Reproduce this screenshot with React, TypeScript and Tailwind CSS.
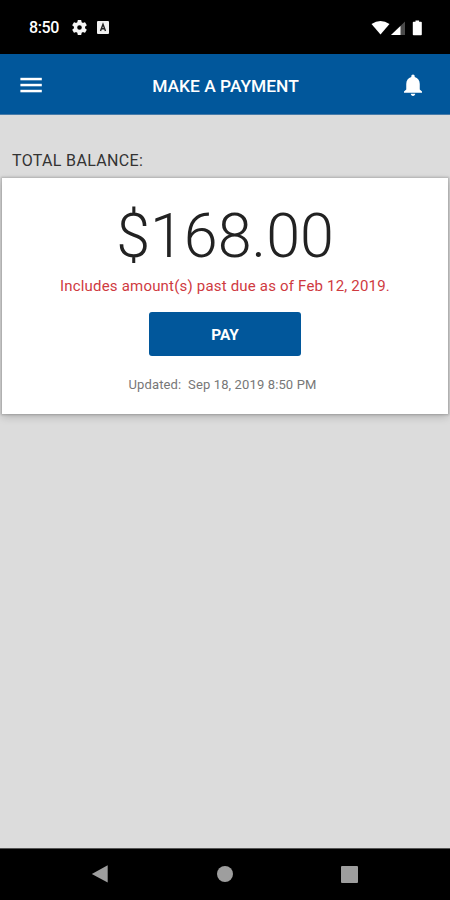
import React from 'react';

function StatusBar() {
  return (
    <div className="flex h-[54px] shrink-0 items-center bg-black pt-px pl-[29px] pr-[26px] text-white">
      <span className="w-[43px] pt-px text-[16px] leading-5 font-medium tracking-[-0.4px] whitespace-nowrap">8:50</span>
      <svg className="h-[15px] w-[15px]" viewBox="2.3 2.3 19.4 19.4" fill="#f5f5f5">
        <path d="M19.14 12.94c.04-.3.06-.61.06-.94s-.02-.64-.07-.94l2.03-1.58a.49.49 0 0 0 .12-.61l-1.92-3.32a.49.49 0 0 0-.59-.22l-2.39.96a7 7 0 0 0-1.62-.94l-.36-2.54A.48.48 0 0 0 13.92 2.4h-3.84a.48.48 0 0 0-.48.41l-.36 2.54c-.59.24-1.13.57-1.62.94l-2.39-.96a.48.48 0 0 0-.59.22L2.72 8.87a.48.48 0 0 0 .12.61l2.03 1.58c-.05.3-.07.62-.07.94s.02.64.07.94l-2.03 1.58a.49.49 0 0 0-.12.61l1.92 3.32c.12.22.37.29.59.22l2.39-.96c.5.38 1.03.7 1.62.94l.36 2.54c.05.24.24.41.48.41h3.84c.24 0 .44-.17.47-.41l.36-2.54a7 7 0 0 0 1.62-.94l2.39.96c.22.08.47 0 .59-.22l1.92-3.32a.48.48 0 0 0-.12-.61zM12 15a3 3 0 1 1 0-6 3 3 0 0 1 0 6z" />
      </svg>
      <svg className="ml-[10px] h-[13px] w-[12px]" viewBox="0 0 12 13" fill="none">
        <rect width="12" height="13" rx="1" fill="#f1f1f1" />
        <path d="M3.5 10 6 3.2 8.5 10M4.4 7.8h3.2" stroke="#222" strokeWidth="1.4" />
      </svg>
      <svg className="mr-[1px] ml-auto h-[16px] w-[52px]" viewBox="0 0 52 16">
        <path d="M.5 4Q5 1 9.5 1T18.5 4L9.5 14.5z" fill="#fff" />
        <path d="M20 15 34 1.5V15z" fill="#4a4a4a" />
        <path d="M20 15 29.5 6v9z" fill="#fff" />
        <path d="M41.8 2.5q0-.8.8-.8h1.9V.5h3.6v1.2h1.9q.8 0 .8.8v12q0 .8-.8.8h-7.4q-.8 0-.8-.8z" fill="#fff" />
      </svg>
    </div>
  );
}

function Header() {
  return (
    <header className="flex h-[61px] shrink-0 items-center justify-between border-b border-[#477ba9] bg-[#01579b] pr-[28px] pl-[20px] text-white">
      <svg className="mt-px h-4 w-[22px]" viewBox="0 0 22 16" fill="#fff">
        <rect x=".4" y=".8" width="21.4" height="2.5" />
        <rect x=".4" y="6.8" width="21.4" height="2.5" />
        <rect x=".4" y="12.8" width="21.4" height="2.5" />
      </svg>
      <h1 className="ml-[5px] pt-[3px] text-[17.4px] leading-5 font-medium whitespace-nowrap">MAKE A PAYMENT</h1>
      <svg className="mt-px h-[22px] w-[18px]" viewBox="4 2 16 20" preserveAspectRatio="none" fill="#fff">
        <path d="M12 22c1.1 0 2-.9 2-2h-4c0 1.1.89 2 2 2zm6-6v-5c0-3.07-1.64-5.64-4.5-6.32V4c0-.83-.67-1.5-1.5-1.5s-1.5.67-1.5 1.5v.68C7.63 5.36 6 7.92 6 11v5l-2 2v1h16v-1l-2-2z" />
      </svg>
    </header>
  );
}

function BalanceCard() {
  return (
    <section className="mx-[2px] mt-[7px] flex h-[236px] flex-col items-center bg-white shadow-[0_0_2px_1px_rgba(0,0,0,0.18),0_3px_8px_rgba(0,0,0,0.18)]">
      <div className="mt-[22px] text-[61px] leading-[72px] font-light whitespace-nowrap text-[#222]">$168.00</div>
      <p className="mt-[4px] text-[15px] leading-5 tracking-[0.19px] whitespace-nowrap text-[#cf3a3f]">Includes amount(s) past due as of Feb 12, 2019.</p>
      <button className="mt-[16px] h-[44px] w-[152px] rounded-[3px] bg-[#01579b] pt-[2px] text-[15.4px] leading-5 font-bold text-white">PAY</button>
      <p className="mt-[19px] mr-[5px] text-[13px] leading-5 tracking-[0.13px] whitespace-pre text-[#777]">{'Updated:  Sep 18, 2019 8:50 PM'}</p>
    </section>
  );
}

function NavigationBar() {
  return (
    <nav className="flex h-[52px] shrink-0 items-center justify-between border-t border-[#555] bg-black pr-[92px] pb-px pl-[91px]">
      <svg className="h-[18px] w-[18px]" viewBox="0 0 18 18">
        <path d="M.8 9 16.7.2v17.4z" fill="#9e9e9e" />
      </svg>
      <div className="h-4 w-4 rounded-full bg-[#9e9e9e]" />
      <div className="h-[17px] w-[17px] rounded-[1px] bg-[#9e9e9e]" />
    </nav>
  );
}

export default function App() {
  return (
    <div className="flex h-[900px] w-[450px] flex-col overflow-hidden bg-[#dcdcdc] font-['Roboto',sans-serif]">
      <StatusBar />
      <Header />
      <main className="flex-1">
        <h2 className="pt-[36px] pl-[12px] text-[16px] leading-5 font-normal tracking-[0.34px] whitespace-nowrap text-[#333]">TOTAL BALANCE:</h2>
        <BalanceCard />
      </main>
      <NavigationBar />
    </div>
  );
}
